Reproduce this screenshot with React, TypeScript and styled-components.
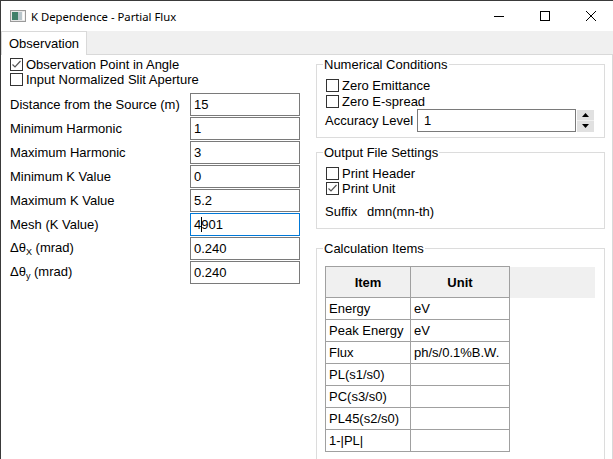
import React from "react";
import styled, { createGlobalStyle } from "styled-components";

const GlobalStyle = createGlobalStyle`
  html, body { margin: 0; padding: 0; background: #fff; }
  body {
    font-family: "Liberation Sans", Arial, sans-serif;
    font-size: 13px;
    color: #000;
  }
  * { box-sizing: border-box; }
`;

const Window = styled.div`
  width: 613px;
  height: 459px;
  border-top: 1px solid #3a3a3a;
  border-left: 1px solid #3a3a3a;
  display: flex;
  flex-direction: column;
  overflow: hidden;
  background: #fff;
`;

const TitleBar = styled.div`
  height: 30px;
  flex: none;
  display: flex;
  align-items: center;
  font-family: "Noto Sans", "Liberation Sans", sans-serif;
  font-size: 11.3px;
`;

const AppIcon = styled.svg`
  margin-left: 9px;
  width: 16px;
  height: 12px;
  flex: none;
`;

const Title = styled.span`
  margin-left: 5px;
`;

const Caption = styled.div`
  margin-left: auto;
  margin-right: -1px;
  display: flex;
  height: 30px;
`;

const CaptionButton = styled.div`
  width: 46px;
  height: 30px;
  display: flex;
  align-items: center;
  justify-content: center;
`;

const TabStrip = styled.div`
  height: 24px;
  flex: none;
  display: flex;
  align-items: flex-end;
  background: #f0f0f0;
  border-bottom: 1px solid #d9d9d9;
`;

const Tab = styled.div`
  height: 24px;
  margin-bottom: -1px;
  padding: 0 7px;
  display: flex;
  align-items: center;
  background: #fff;
  border: 1px solid #d9d9d9;
  border-bottom: none;
  position: relative;
`;

const TabPage = styled.div`
  flex: 1;
  display: flex;
  border-right: 1px solid #d9d9d9;
  min-height: 0;
`;

const LeftColumn = styled.div`
  width: 299px;
  flex: none;
  padding: 2px 0 0 9px;
  display: flex;
  flex-direction: column;
`;

const RightColumn = styled.div`
  width: 289px;
  flex: none;
  margin-left: 16px;
  padding-top: 2px;
  display: flex;
  flex-direction: column;
`;

const CheckRow = styled.div<{ $h?: number }>`
  height: ${(p) => p.$h ?? 15}px;
  display: flex;
  align-items: center;
  gap: 3px;
  white-space: nowrap;
`;

const Box = styled.span`
  width: 13px;
  height: 13px;
  flex: none;
  border: 1px solid #333;
  background: #fff;
  display: flex;
  align-items: center;
  justify-content: center;
`;

const FieldGrid = styled.div`
  margin-top: 6px;
  display: grid;
  grid-template-columns: 180px 110px;
  grid-auto-rows: 23px;
  row-gap: 1px;
  align-items: center;
`;

const Label = styled.span`
  white-space: nowrap;
`;

const Field = styled.div<{ $focused?: boolean; $w?: number; $pl?: number }>`
  height: 23px;
  width: ${(p) => (p.$w ? `${p.$w}px` : "auto")};
  border: 1px solid ${(p) => (p.$focused ? "#0078d7" : "#7a7a7a")};
  background: #fff;
  padding-left: ${(p) => p.$pl ?? 3}px;
  display: flex;
  align-items: center;
  white-space: nowrap;
`;

const Caret = styled.span`
  display: inline-block;
  width: 1px;
  height: 15px;
  margin-right: -1px;
  background: #000;
`;

const Sub = styled.sub`
  font-size: 9px;
  vertical-align: -3px;
`;

const Group = styled.fieldset<{ $mt?: number; $pt?: number; $pb?: number; $h?: number }>`
  margin: ${(p) => p.$mt ?? 0}px 0 0 0;
  border: 1px solid #dcdcdc;
  padding: ${(p) => p.$pt ?? 5}px 9px ${(p) => p.$pb ?? 5}px 9px;
  min-width: 0;
  flex: none;
  ${(p) => (p.$h ? `height: ${p.$h}px;` : "")}
`;

const Legend = styled.legend`
  padding: 0 1px;
  margin-left: -3px;
  font-size: 13px;
  line-height: 15px;
`;

const AccuracyRow = styled.div`
  height: 23px;
  display: flex;
  align-items: center;
`;

const AccuracyLabel = styled.span`
  width: 92px;
  margin-left: -1px;
  flex: none;
`;

const Spinner = styled.div`
  width: 17px;
  height: 22px;
  margin-left: 1px;
  display: flex;
  flex-direction: column;
  gap: 1px;
  background: #f0f0f0;
`;

const SpinButton = styled.div`
  flex: 1;
  background: #e1e1e1;
  display: flex;
  align-items: center;
  justify-content: center;
`;

const SuffixRow = styled.div`
  margin-top: 7px;
  height: 16px;
  display: flex;
  align-items: center;
  margin-left: -1px;
`;

const SuffixLabel = styled.span`
  width: 42px;
`;

const Grid = styled.table`
  margin-left: -1px;
  border-collapse: collapse;
  table-layout: fixed;
  width: 270px;
`;

const HeadCell = styled.th<{ $filler?: boolean }>`
  height: 31px;
  padding: 0;
  background: #f0f0f0;
  border: ${(p) => (p.$filler ? "none" : "1px solid #a0a0a0")};
  font-weight: bold;
  text-align: center;
`;

const Cell = styled.td<{ $filler?: boolean }>`
  height: 22px;
  padding: 0 0 0 3px;
  border: ${(p) => (p.$filler ? "none" : "1px solid #a0a0a0")};
  white-space: nowrap;
  overflow: hidden;
`;

const Check = () => (
  <svg width="11" height="11" viewBox="0 0 11 11">
    <polyline points="1.5,5.5 4,8 9.5,2" fill="none" stroke="#555" strokeWidth="1.2" />
  </svg>
);

const CheckBox = ({ checked, label, h }: { checked?: boolean; label: string; h?: number }) => (
  <CheckRow $h={h}>
    <Box>{checked ? <Check /> : null}</Box>
    <span>{label}</span>
  </CheckRow>
);

const fields: { label: React.ReactNode; value: string; focused?: boolean }[] = [
  { label: "Distance from the Source (m)", value: "15" },
  { label: "Minimum Harmonic", value: "1" },
  { label: "Maximum Harmonic", value: "3" },
  { label: "Minimum K Value", value: "0" },
  { label: "Maximum K Value", value: "5.2" },
  { label: "Mesh (K Value)", value: "4901", focused: true },
  {
    label: (
      <>
        Δθ<Sub>X</Sub> (mrad)
      </>
    ),
    value: "0.240",
  },
  {
    label: (
      <>
        Δθ<Sub>y</Sub> (mrad)
      </>
    ),
    value: "0.240",
  },
];

const items: [string, string][] = [
  ["Energy", "eV"],
  ["Peak Energy", "eV"],
  ["Flux", "ph/s/0.1%B.W."],
  ["PL(s1/s0)", ""],
  ["PC(s3/s0)", ""],
  ["PL45(s2/s0)", ""],
  ["1-|PL|", ""],
];

export default function App() {
  return (
    <>
      <GlobalStyle />
      <Window>
        <TitleBar>
          <AppIcon viewBox="0 0 16 12">
            <rect x="0.5" y="0.5" width="15" height="11" fill="#e8e8e8" stroke="#9a9a9a" />
            <rect x="2" y="2" width="6" height="8" fill="#3f7f6a" />
            <rect x="8" y="2" width="4" height="8" fill="#b9c6cc" />
            <rect x="12.5" y="2" width="2" height="8" fill="#fff" />
          </AppIcon>
          <Title>K Dependence - Partial Flux</Title>
          <Caption>
            <CaptionButton>
              <svg width="10" height="10" viewBox="0 0 10 10">
                <line x1="0" y1="5.5" x2="10" y2="5.5" stroke="#000" strokeWidth="1" />
              </svg>
            </CaptionButton>
            <CaptionButton>
              <svg width="10" height="10" viewBox="0 0 10 10">
                <rect x="0.5" y="0.5" width="9" height="9" fill="none" stroke="#000" strokeWidth="1" />
              </svg>
            </CaptionButton>
            <CaptionButton>
              <svg width="10" height="10" viewBox="0 0 10 10">
                <path d="M0 0 L10 10 M10 0 L0 10" stroke="#000" strokeWidth="1" />
              </svg>
            </CaptionButton>
          </Caption>
        </TitleBar>
        <TabStrip>
          <Tab>Observation</Tab>
        </TabStrip>
        <TabPage>
          <LeftColumn>
            <CheckBox checked label="Observation Point in Angle" />
            <CheckBox label="Input Normalized Slit Aperture" />
            <FieldGrid>
              {fields.map((f, i) => (
                <React.Fragment key={i}>
                  <Label>{f.label}</Label>
                  <Field $focused={f.focused}>
                    {f.focused ? (
                      <>
                        {f.value.slice(0, 1)}
                        <Caret />
                        {f.value.slice(1)}
                      </>
                    ) : (
                      f.value
                    )}
                  </Field>
                </React.Fragment>
              ))}
            </FieldGrid>
          </LeftColumn>
          <RightColumn>
            <Group $pt={5} $pb={5}>
              <Legend>Numerical Conditions</Legend>
              <CheckBox label="Zero Emittance" h={16} />
              <CheckBox label="Zero E-spread" h={16} />
              <AccuracyRow>
                <AccuracyLabel>Accuracy Level</AccuracyLabel>
                <Field $w={159} $pl={6}>1</Field>
                <Spinner>
                  <SpinButton>
                    <svg width="7" height="4" viewBox="0 0 7 4">
                      <polygon points="0,4 7,4 3.5,0" fill="#000" />
                    </svg>
                  </SpinButton>
                  <SpinButton>
                    <svg width="7" height="4" viewBox="0 0 7 4">
                      <polygon points="0,0 7,0 3.5,4" fill="#000" />
                    </svg>
                  </SpinButton>
                </Spinner>
              </AccuracyRow>
            </Group>
            <Group $mt={7} $pt={6} $pb={9}>
              <Legend>Output File Settings</Legend>
              <CheckBox label="Print Header" />
              <CheckBox checked label="Print Unit" />
              <SuffixRow>
                <SuffixLabel>Suffix</SuffixLabel>
                <span>dmn(mn-th)</span>
              </SuffixRow>
            </Group>
            <Group $mt={12} $pt={10} $pb={0} $h={260}>
              <Legend>Calculation Items</Legend>
              <Grid>
                <colgroup>
                  <col style={{ width: 85 }} />
                  <col style={{ width: 99 }} />
                  <col />
                </colgroup>
                <thead>
                  <tr>
                    <HeadCell>Item</HeadCell>
                    <HeadCell>Unit</HeadCell>
                    <HeadCell $filler />
                  </tr>
                </thead>
                <tbody>
                  {items.map(([name, unit]) => (
                    <tr key={name}>
                      <Cell>{name}</Cell>
                      <Cell>{unit}</Cell>
                      <Cell $filler />
                    </tr>
                  ))}
                </tbody>
              </Grid>
            </Group>
          </RightColumn>
        </TabPage>
      </Window>
    </>
  );
}
